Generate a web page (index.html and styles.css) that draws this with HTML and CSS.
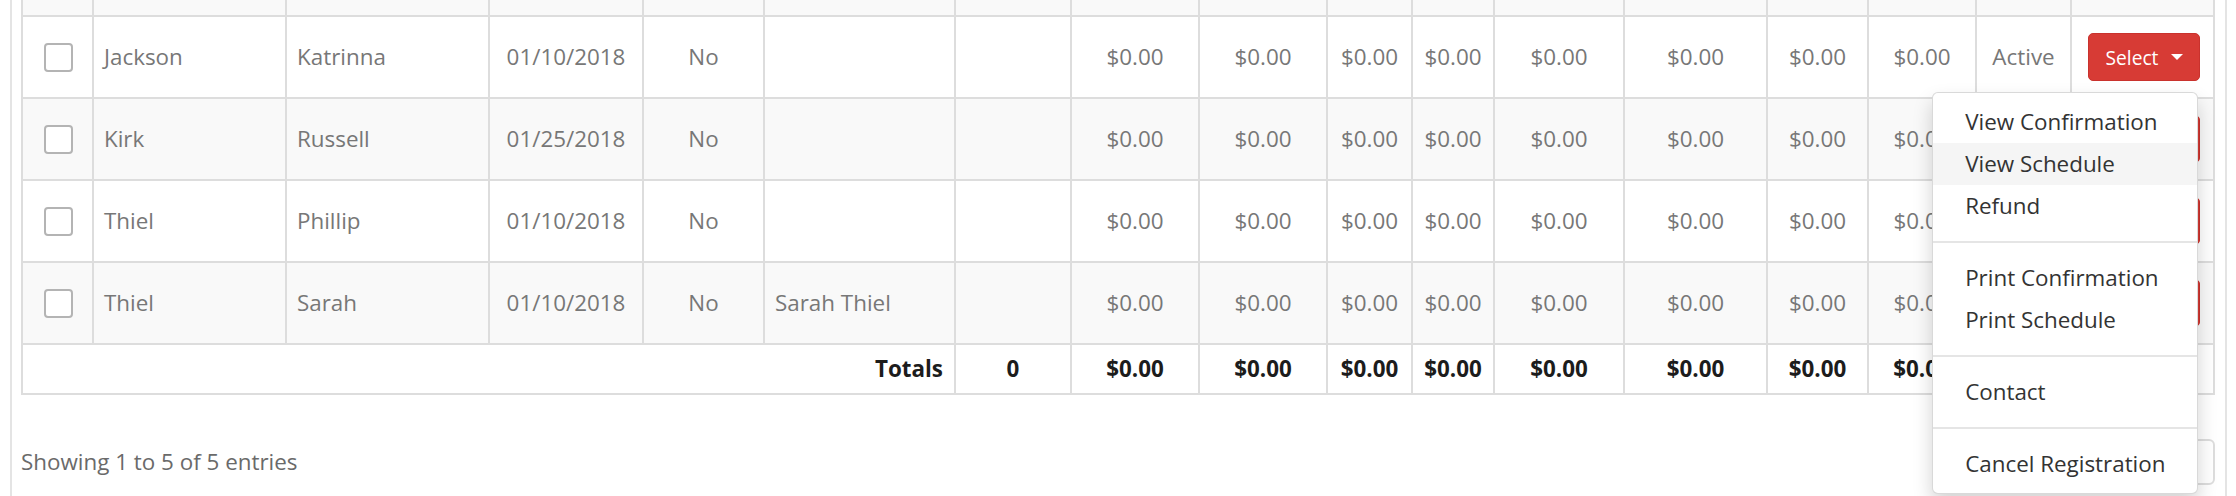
FILE: index.html
```html
<!DOCTYPE html>
<html lang="en">
<head>
<meta charset="utf-8">
<title>Registrations</title>
<link rel="stylesheet" href="styles.css">
</head>
<body>
<div class="panel">
  <div class="grid-table">
    <div class="tr stub striped">
      <div class="td"></div><div class="td"></div><div class="td"></div><div class="td"></div><div class="td"></div><div class="td"></div><div class="td"></div><div class="td"></div><div class="td"></div><div class="td"></div><div class="td"></div><div class="td"></div><div class="td"></div><div class="td"></div><div class="td"></div><div class="td"></div><div class="td"></div>
    </div>

    <div class="tr">
      <div class="td c"><span class="check"></span></div>
      <div class="td">Jackson</div>
      <div class="td">Katrinna</div>
      <div class="td c">01/10/2018</div>
      <div class="td c">No</div>
      <div class="td"></div>
      <div class="td"></div>
      <div class="td c">$0.00</div>
      <div class="td c">$0.00</div>
      <div class="td c">$0.00</div>
      <div class="td c">$0.00</div>
      <div class="td c">$0.00</div>
      <div class="td c">$0.00</div>
      <div class="td c">$0.00</div>
      <div class="td c">$0.00</div>
      <div class="td c">Active</div>
      <div class="td c">
        <div class="btn-group">
          <button class="btn-select">Select <span class="caret"></span></button>
          <ul class="dropdown">
            <li><a>View Confirmation</a></li>
            <li class="hover"><a>View Schedule</a></li>
            <li><a>Refund</a></li>
            <li class="divider"></li>
            <li><a>Print Confirmation</a></li>
            <li><a>Print Schedule</a></li>
            <li class="divider"></li>
            <li><a>Contact</a></li>
            <li class="divider"></li>
            <li><a>Cancel Registration</a></li>
          </ul>
        </div>
      </div>
    </div>

    <div class="tr striped">
      <div class="td c"><span class="check"></span></div>
      <div class="td">Kirk</div>
      <div class="td">Russell</div>
      <div class="td c">01/25/2018</div>
      <div class="td c">No</div>
      <div class="td"></div>
      <div class="td"></div>
      <div class="td c">$0.00</div>
      <div class="td c">$0.00</div>
      <div class="td c">$0.00</div>
      <div class="td c">$0.00</div>
      <div class="td c">$0.00</div>
      <div class="td c">$0.00</div>
      <div class="td c">$0.00</div>
      <div class="td c">$0.00</div>
      <div class="td c">Active</div>
      <div class="td c"><div class="btn-group"><button class="btn-select">Select <span class="caret"></span></button></div></div>
    </div>

    <div class="tr">
      <div class="td c"><span class="check"></span></div>
      <div class="td">Thiel</div>
      <div class="td">Phillip</div>
      <div class="td c">01/10/2018</div>
      <div class="td c">No</div>
      <div class="td"></div>
      <div class="td"></div>
      <div class="td c">$0.00</div>
      <div class="td c">$0.00</div>
      <div class="td c">$0.00</div>
      <div class="td c">$0.00</div>
      <div class="td c">$0.00</div>
      <div class="td c">$0.00</div>
      <div class="td c">$0.00</div>
      <div class="td c">$0.00</div>
      <div class="td c">Active</div>
      <div class="td c"><div class="btn-group"><button class="btn-select">Select <span class="caret"></span></button></div></div>
    </div>

    <div class="tr striped">
      <div class="td c"><span class="check"></span></div>
      <div class="td">Thiel</div>
      <div class="td">Sarah</div>
      <div class="td c">01/10/2018</div>
      <div class="td c">No</div>
      <div class="td">Sarah Thiel</div>
      <div class="td"></div>
      <div class="td c">$0.00</div>
      <div class="td c">$0.00</div>
      <div class="td c">$0.00</div>
      <div class="td c">$0.00</div>
      <div class="td c">$0.00</div>
      <div class="td c">$0.00</div>
      <div class="td c">$0.00</div>
      <div class="td c">$0.00</div>
      <div class="td c">Active</div>
      <div class="td c"><div class="btn-group"><button class="btn-select">Select <span class="caret"></span></button></div></div>
    </div>

    <div class="tr totals">
      <div class="td r span6">Totals</div>
      <div class="td c">0</div>
      <div class="td c">$0.00</div>
      <div class="td c">$0.00</div>
      <div class="td c">$0.00</div>
      <div class="td c">$0.00</div>
      <div class="td c">$0.00</div>
      <div class="td c">$0.00</div>
      <div class="td c">$0.00</div>
      <div class="td c">$0.00</div>
      <div class="td"></div>
      <div class="td"></div>
    </div>
  </div>

  <div class="footer">
    <div class="info">Showing 1 to 5 of 5 entries</div>
    <nav class="pagination" aria-label="Table pages">
      <a class="page-box" aria-label="Previous page"></a>
      <a class="page-box" aria-label="Page 1"></a>
      <a class="page-box" aria-label="Next page"></a>
    </nav>
  </div>
</div>
</body>
</html>
```

FILE: styles.css
```css
html, body {
  margin: 0;
  padding: 0;
  background: #ffffff;
}

body {
  font-family: "Open Sans", "Liberation Sans", sans-serif;
  font-size: 22.4px;
  line-height: 32px;
  color: #777777;
  overflow: hidden;
}

.panel {
  margin: 0 9px 0 10px;
  padding: 0 10px 0 9px;
  border-left: 2px solid #e4e4e4;
  border-right: 2px solid #e4e4e4;
  min-height: 496px;
}

.grid-table {
  border-left: 2px solid #dddddd;
}

.tr {
  display: grid;
  grid-template-columns: 71px 193px 203px 154px 121px 191px 116px 128px 128px 85px 82px 130px 143px 101px 108px 95px 143px;
  height: 80px;
  border-bottom: 2px solid #dddddd;
  background: #ffffff;
}

.tr.striped {
  background: #f9f9f9;
}

.tr.stub {
  height: 15px;
}

.tr.totals {
  height: 48px;
  font-weight: 700;
  color: #1c1c1c;
}

.td {
  border-right: 2px solid #dddddd;
  padding: 0 10px;
  display: flex;
  align-items: center;
  white-space: nowrap;
  min-width: 0;
}

.td.c {
  justify-content: center;
  padding: 0;
}

.td.r {
  justify-content: flex-end;
  padding-right: 11px;
}

.span6 {
  grid-column: span 6;
}

.check {
  display: block;
  width: 25px;
  height: 25px;
  border: 2px solid #b4b4b4;
  border-radius: 4px;
  background: #ffffff;
  margin-left: 1px;
}

.btn-group {
  position: relative;
  display: inline-flex;
  margin-left: 3px;
}

.btn-select {
  display: inline-flex;
  align-items: center;
  gap: 13px;
  height: 48px;
  padding: 0 16px 0 17px;
  font-family: "Open Sans", "Liberation Sans", sans-serif;
  font-size: 19.2px;
  color: #ffffff;
  background: #d73b35;
  border: 1px solid #c9322d;
  border-radius: 5px;
}

.caret {
  display: block;
  width: 0;
  height: 0;
  border-top: 6.4px solid #ffffff;
  border-left: 6.4px solid transparent;
  border-right: 6.4px solid transparent;
}

.dropdown {
  position: absolute;
  top: calc(100% + 11px);
  right: 2px;
  z-index: 10;
  margin: 0;
  padding: 8px 0;
  list-style: none;
  background: #ffffff;
  border: 1.6px solid rgba(0, 0, 0, 0.15);
  border-radius: 6px;
  box-shadow: 0 10px 19px rgba(0, 0, 0, 0.175);
  color: #333333;
  white-space: nowrap;
}

.dropdown li a {
  display: block;
  padding: 0 32px;
  line-height: 42px;
  height: 42px;
}

.dropdown li.hover a {
  background: #f5f5f5;
}

.dropdown li.divider {
  height: 2px;
  margin: 14px 0;
  background: #e5e5e5;
}

.footer {
  display: flex;
  align-items: center;
  justify-content: space-between;
  margin-top: 44px;
  height: 46px;
}

.info {
  color: #6a6a6a;
}

.pagination {
  display: flex;
}

.page-box {
  display: block;
  width: 60px;
  height: 42px;
  border: 2px solid #dddddd;
  margin-left: -2px;
  background: #ffffff;
}

.page-box:first-child {
  width: 130px;
  border-radius: 6px 0 0 6px;
}

.page-box:last-child {
  width: 85px;
  border-radius: 0 6px 6px 0;
}
```
